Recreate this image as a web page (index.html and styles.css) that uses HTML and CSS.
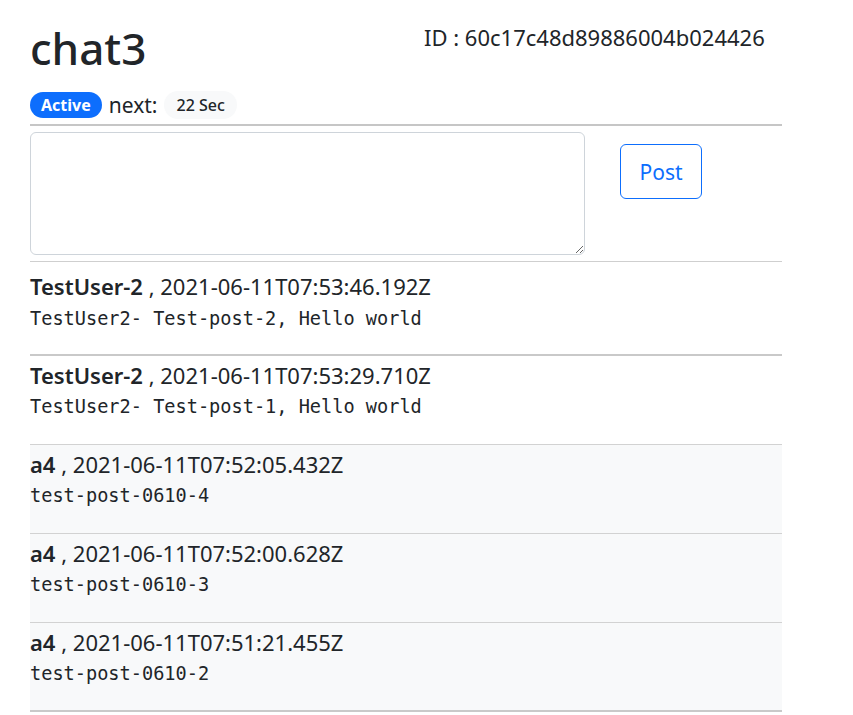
FILE: index.html
```html
<!DOCTYPE html>
<html>
<head>
<meta charset="utf-8">
<link rel="stylesheet" href="styles.css">
</head>
<body>
<div class="page">
  <div class="header">
    <div class="title-col">
      <h1 class="title">chat3</h1>
      <div class="status">
        <span class="badge badge-active">Active</span>
        <span class="next">next:</span>
        <span class="badge badge-light">22 Sec</span>
      </div>
    </div>
    <div class="id">ID : 60c17c48d89886004b024426</div>
  </div>
  <hr class="rule">
  <div class="compose">
    <textarea class="input"></textarea>
    <div class="post-col"><button class="btn-post">Post</button></div>
  </div>
  <hr class="rule thin">
  <div class="messages">
    <div class="msg first">
      <div class="meta"><b>TestUser-2</b> , 2021-06-11T07:53:46.192Z</div>
      <div class="body">TestUser2- Test-post-2, Hello world</div>
    </div>
    <div class="msg">
      <div class="meta"><b>TestUser-2</b> , 2021-06-11T07:53:29.710Z</div>
      <div class="body">TestUser2- Test-post-1, Hello world</div>
    </div>
    <div class="msg shaded">
      <div class="meta"><b>a4</b> , 2021-06-11T07:52:05.432Z</div>
      <div class="body">test-post-0610-4</div>
    </div>
    <div class="msg shaded">
      <div class="meta"><b>a4</b> , 2021-06-11T07:52:00.628Z</div>
      <div class="body">test-post-0610-3</div>
    </div>
    <div class="msg shaded last">
      <div class="meta"><b>a4</b> , 2021-06-11T07:51:21.455Z</div>
      <div class="body">test-post-0610-2</div>
    </div>
  </div>
</div>
</body>
</html>
```

FILE: styles.css
```css
* { box-sizing: border-box; }
body {
  margin: 0;
  font-family: "Noto Sans", "Open Sans", sans-serif;
  color: #212529;
  background: #fff;
}
.page {
  margin-left: 30px;
  width: 752px;
  padding-top: 20px;
}
.header {
  display: grid;
  grid-template-columns: 394px 1fr;
}
.title {
  margin: 0;
  font-size: 44px;
  font-weight: 500;
  line-height: 56px;
}
.status {
  display: flex;
  align-items: center;
  gap: 7px;
  margin-top: 15px;
  height: 28px;
}
.badge {
  display: inline-block;
  border-radius: 14px;
  line-height: 26px;
  height: 26px;
}
.badge-active {
  background: #0d6efd;
  color: #fff;
  font-weight: 700;
  font-size: 16px;
  padding: 0 11px;
}
.badge-light {
  background: #f8f9fa;
  color: #212529;
  font-weight: 500;
  font-size: 16px;
  height: 28px;
  line-height: 28px;
  padding: 0 12px;
}
.next {
  font-size: 21px;
  font-weight: 400;
  line-height: 28px;
}
.id {
  font-size: 22px;
  font-weight: 400;
  line-height: 32px;
  padding-top: 1px;
}
.rule {
  margin: 5px 0 0;
  border: 0;
  border-top: 2px solid #c6c6c6;
}
.rule.thin {
  margin-top: 6px;
  border-top: 1px solid #cfcfcf;
}
.compose {
  display: flex;
  padding-top: 6px;
}
.input {
  width: 555px;
  height: 123px;
  border: 1px solid #ced4da;
  border-radius: 6px;
  resize: vertical;
  margin: 0;
  display: block;
}
.post-col {
  padding-left: 35px;
  padding-top: 12px;
}
.btn-post {
  background: #fff;
  border: 1px solid #0d6efd;
  color: #0d6efd;
  font-family: inherit;
  font-size: 21px;
  font-weight: 400;
  border-radius: 6px;
  width: 82px;
  height: 55px;
  padding: 0;
}
.msg {
  padding: 4px 0 0;
  height: 89px;
  border-bottom: 1px solid #d2d2d2;
}
.msg.first {
  height: 94px;
  padding-top: 9px;
  border-bottom: 2px solid #c9c9c9;
}
.msg.shaded { background: #f8f9fa; }
.msg.last { border-bottom: 2px solid #c9c9c9; }
.meta {
  font-size: 22px;
  font-weight: 400;
  line-height: 30px;
}
.meta b { font-weight: 600; }
.body {
  font-family: "DejaVu Sans Mono", monospace;
  font-size: 18.6px;
  font-weight: 400;
  line-height: 28px;
  margin-top: 3px;
}
.msg.first .body { margin-top: 4px; }
```
